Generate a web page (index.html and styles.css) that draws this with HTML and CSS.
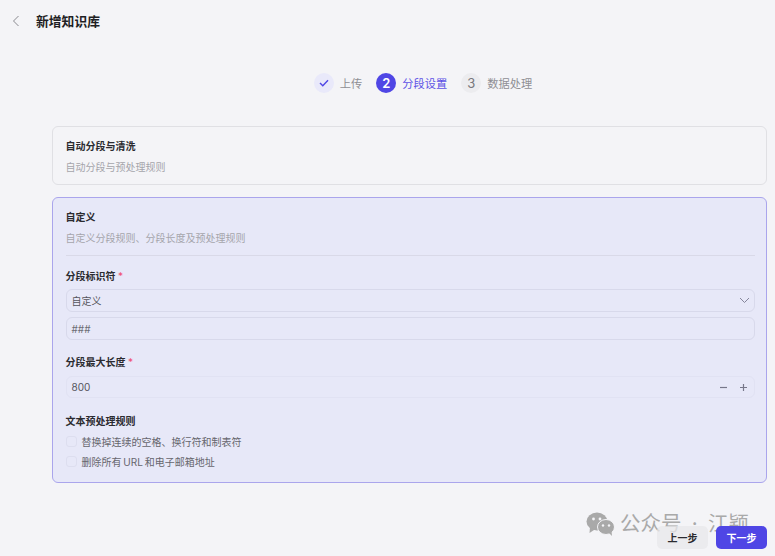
FILE: index.html
```html
<!DOCTYPE html>
<html lang="zh-CN">
<head>
  <meta charset="UTF-8" />
  <title>新增知识库</title>
  <link rel="stylesheet" href="styles.css">
</head>
<body>

  <!-- header -->
  <div class="header">
    <svg class="back" width="8" height="12" viewBox="0 0 8 12"><path d="M6.5 1 L1.5 6 L6.5 11" fill="none" stroke="#8a8a90" stroke-width="1"/></svg>
    <div class="title">新增知识库</div>
  </div>

  <!-- steps -->
  <div class="steps">
    <div class="step">
      <span class="dot dot-done">
        <svg width="10" height="8" viewBox="0 0 10 8"><path d="M1 4 L3.8 6.8 L9 1.2" fill="none" stroke="#4f46e5" stroke-width="1.4"/></svg>
      </span>
      <span class="step-text">上传</span>
    </div>
    <div class="step">
      <span class="dot dot-active">2</span>
      <span class="step-text step-text-active">分段设置</span>
    </div>
    <div class="step">
      <span class="dot dot-todo">3</span>
      <span class="step-text">数据处理</span>
    </div>
  </div>

  <div class="content">
    <div class="card">
      <div class="card-title">自动分段与清洗</div>
      <div class="card-desc">自动分段与预处理规则</div>
    </div>

    <div class="card card-active">
      <div class="card-title">自定义</div>
      <div class="card-desc">自定义分段规则、分段长度及预处理规则</div>
      <div class="divider"></div>

      <div class="label label-first">分段标识符 <span class="req">*</span></div>
      <div class="field field-select">
        <span>自定义</span>
        <svg width="11" height="7" viewBox="0 0 11 7"><path d="M1 1 L5.5 5.5 L10 1" fill="none" stroke="#85859a" stroke-width="1"/></svg>
      </div>
      <div class="field field-input">###</div>

      <div class="label label-len">分段最大长度 <span class="req">*</span></div>
      <div class="field field-number">
        <span>800</span>
        <div class="stepper">
          <svg width="9" height="9" viewBox="0 0 9 9"><path d="M1 4.5 H8" stroke="#77778a" stroke-width="1.2"/></svg>
          <svg width="9" height="9" viewBox="0 0 9 9"><path d="M1 4.5 H8 M4.5 1 V8" stroke="#77778a" stroke-width="1.2"/></svg>
        </div>
      </div>

      <div class="label label-rules">文本预处理规则</div>
      <div class="check-row"><span class="check"></span>替换掉连续的空格、换行符和制表符</div>
      <div class="check-row"><span class="check"></span>删除所有 URL 和电子邮箱地址</div>
    </div>
  </div>

  <!-- watermark, the buttons sit on top of it -->
  <div class="watermark">
    <svg width="29" height="24" viewBox="0 0 29 24">
      <ellipse cx="11" cy="9.5" rx="10.5" ry="9" fill="#a9a9a9"/>
      <path d="M4 15 L3.5 21 L9.5 17 Z" fill="#a9a9a9"/>
      <ellipse cx="20" cy="15" rx="8.5" ry="7.5" fill="#a9a9a9" stroke="#f4f4f7" stroke-width="1"/>
      <path d="M23 21 L26 24 L25.5 19 Z" fill="#a9a9a9"/>
      <circle cx="7.5" cy="7" r="1.4" fill="#f4f4f7"/>
      <circle cx="14" cy="7" r="1.4" fill="#f4f4f7"/>
      <circle cx="17" cy="13.5" r="1.2" fill="#f4f4f7"/>
      <circle cx="23" cy="13.5" r="1.2" fill="#f4f4f7"/>
    </svg>
    <span>公众号 · 江颖</span>
  </div>

  <!-- footer buttons -->
  <div class="footer">
    <button class="btn btn-prev">上一步</button>
    <button class="btn btn-next">下一步</button>
  </div>

</body>
</html>
```

FILE: styles.css
```css
* {
  box-sizing: border-box;
}

html, body {
  height: 100%;
}

body {
  margin: 0;
  position: relative;
  overflow: hidden;
  background-color: #f4f4f7;
  color: #222;
  font-family: "Inter", "Noto Sans CJK SC", sans-serif;
  font-size: 10px;
}

.header {
  display: flex;
  align-items: center;
  height: 40px;
  padding-left: 12px;
}

.back {
  margin: 2px 16px 0 0;
}

.title {
  font-size: 12.8px;
  font-weight: 700;
  color: #1f1f24;
}

.steps {
  display: flex;
  justify-content: center;
  align-items: center;
  gap: 14px;
  height: 20px;
  margin: 33px 0 0;
  padding-left: 71px;
}

.step {
  display: flex;
  align-items: center;
  gap: 6px;
}

.dot {
  display: flex;
  justify-content: center;
  align-items: center;
  width: 20px;
  height: 20px;
  border-radius: 50%;
  font-size: 13px;
}

.dot-done {
  background-color: #e9e9fa;
}

.dot-active {
  background-color: #4f46e5;
  color: #fff;
  font-weight: 600;
}

.dot-todo {
  background-color: #ececef;
  color: #77777c;
}

.step-text {
  font-size: 11.25px;
  color: #8f8f94;
}

.step-text-active {
  color: #5d52e6;
}

.content {
  margin: 33px 8px 0 52px;
}

.card {
  height: 59px;
  padding: 12px 11px 0 12.5px;
  margin-bottom: 12px;
  border: 1px solid #e0e0e4;
  border-radius: 6px;
}

.card-active {
  height: 286px;
  background-color: #e7e8f8;
  border-color: #aaa5ec;
}

.card-title {
  font-weight: 600;
  line-height: 14px;
  color: #2b2b30;
}

.card-desc {
  margin-top: 7px;
  line-height: 14px;
  color: #a5a5ab;
}

.divider {
  height: 1px;
  margin: 10px 0 0;
  background-color: #d9d9e8;
}

.label {
  font-weight: 600;
  line-height: 14px;
  color: #2b2b30;
}

.label-first {
  margin-top: 13px;
}

.label-len {
  margin-top: 15px;
}

.label-rules {
  margin-top: 16px;
}

.req {
  color: #f04d6d;
  font-weight: 400;
}

.field {
  display: flex;
  justify-content: space-between;
  align-items: center;
  height: 23px;
  padding: 0 4px 0 5px;
  margin-top: 6px;
  border: 1px solid #d8d9eb;
  border-radius: 6px;
  color: #55555c;
}

.field-input {
  margin-top: 5px;
  color: #6d6d74;
}

.field-number {
  height: 22px;
  margin-top: 7px;
  padding-right: 6px;
  border-color: #e1e2f3;
}

.stepper {
  display: flex;
  align-items: center;
  gap: 11px;
}

.check-row {
  display: flex;
  align-items: center;
  gap: 5px;
  height: 20px;
  word-spacing: -1px;
  color: #66666d;
}

.label-rules + .check-row {
  margin-top: 3px;
}

.check {
  width: 11px;
  height: 11px;
  border: 1px solid #dddeef;
  border-radius: 3px;
}

.footer {
  position: absolute;
  right: 8px;
  bottom: 7px;
  display: flex;
  gap: 8px;
}

.btn {
  width: 51px;
  height: 23px;
  padding: 0;
  border: none;
  border-radius: 5px;
  font-family: inherit;
  font-size: 10px;
  font-weight: 600;
}

.btn-prev {
  background-color: rgba(232, 232, 235, 0.75);
  color: #2b2b30;
}

.btn-next {
  background-color: #4f46e5;
  color: #fff;
}

.watermark {
  position: absolute;
  left: 586px;
  top: 512px;
  display: flex;
  align-items: center;
  gap: 5px;
  height: 24px;
  line-height: 24px;
  font-size: 20.5px;
  word-spacing: 4.5px;
  color: #a9a9a9;
  white-space: nowrap;
}
```
